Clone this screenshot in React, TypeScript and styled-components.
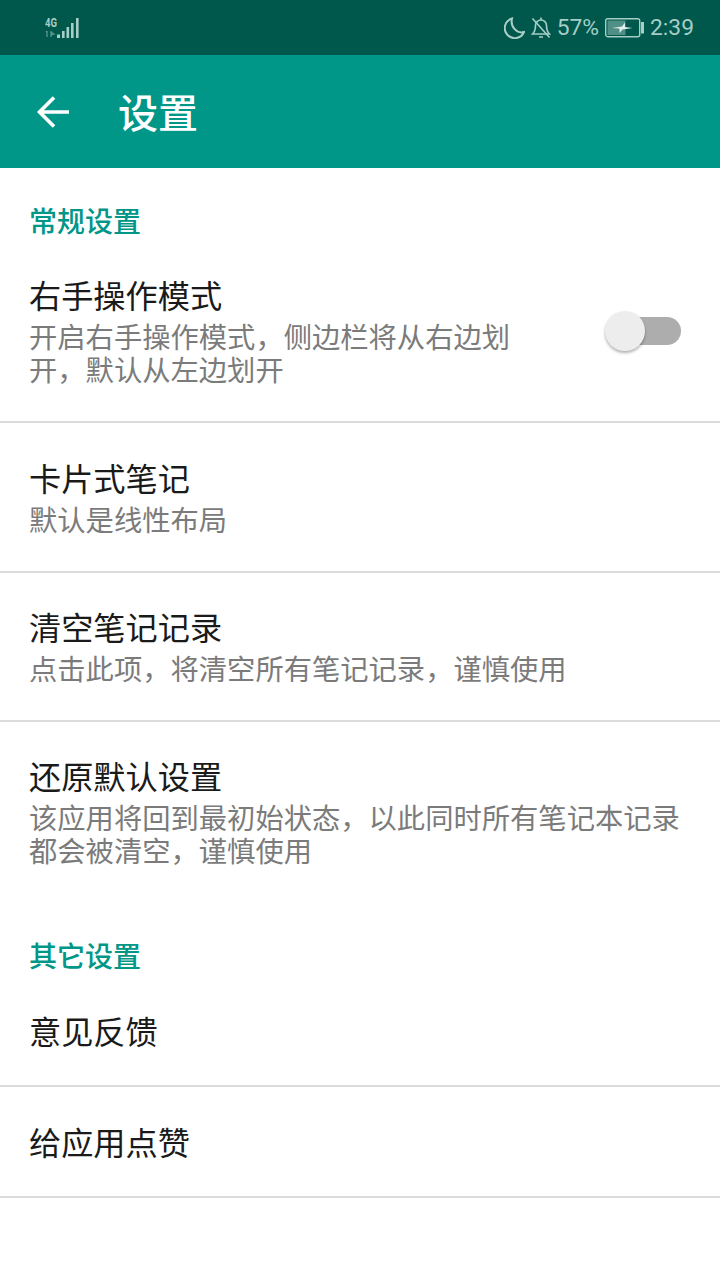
import styled, { createGlobalStyle } from "styled-components";

const GlobalStyle = createGlobalStyle`
    html, body {
        margin: 0;
        padding: 0;
        background: #fff;
    }
    * {
        box-sizing: border-box;
    }
`;

const Page = styled.div`
    width: 720px;
    height: 1280px;
    overflow: hidden;
    background: #fff;
    font-family: "Noto Sans CJK SC", "Noto Sans", sans-serif;
`;

const StatusBar = styled.div`
    display: flex;
    align-items: center;
    justify-content: space-between;
    height: 55px;
    padding: 0 26px 0 45px;
    background: #00574b;
    color: #a6cdc6;
`;

const StatusRight = styled.div`
    display: flex;
    align-items: center;
    gap: 6px;
    font-family: Roboto, sans-serif;
    font-size: 22.8px;
    line-height: 28px;

    svg {
        display: block;
    }
`;

const StatusText = styled.span`
    padding-top: 1px;
`;

const Toolbar = styled.div`
    display: flex;
    align-items: center;
    height: 113px;
    padding-left: 36px;
    background: #009688;
    color: #fff;
`;

const Title = styled.h1`
    margin: -2px 0 0 48px;
    font-size: 40px;
    font-weight: 500;
    line-height: 50px;
`;

const SectionTitle = styled.div<{ $top: number }>`
    padding: ${(p) => p.$top}px 0 0 29px;
    color: #009688;
    font-size: 28px;
    font-weight: 500;
    line-height: 36px;
`;

const Row = styled.div<{ $height: number; $top: number; $line?: boolean }>`
    display: flex;
    align-items: flex-start;
    justify-content: space-between;
    height: ${(p) => p.$height}px;
    padding: ${(p) => p.$top}px 39px 0 29px;
    border-bottom: ${(p) => (p.$line === false ? "none" : "2px solid #dcdcdc")};
`;

const RowText = styled.div<{ $width?: number }>`
    width: ${(p) => (p.$width ? `${p.$width}px` : "auto")};
`;

const RowTitle = styled.div`
    margin-bottom: 4px;
    color: #1a1a1a;
    font-size: 32.2px;
    line-height: 42px;
`;

const RowDesc = styled.div`
    color: #7b7b7b;
    font-size: 28.3px;
    line-height: 33px;
`;

const Switch = styled.div`
    position: relative;
    flex: none;
    width: 76px;
    height: 44px;
    margin-top: 36px;
`;

const SwitchTrack = styled.div`
    position: absolute;
    top: 8px;
    left: 10px;
    width: 66px;
    height: 28px;
    border-radius: 14px;
    background: #adadad;
`;

const SwitchThumb = styled.div`
    position: absolute;
    top: 2px;
    left: 0;
    width: 40px;
    height: 40px;
    border-radius: 50%;
    background: #ededed;
    box-shadow: 0 2px 3px rgba(0, 0, 0, 0.3);
`;

function SignalIcon() {
    return (
        <svg width="36" height="24" viewBox="45 15 36 24">
            <text
                x="45"
                y="26"
                fontFamily="Roboto, sans-serif"
                fontSize="13"
                fontWeight="700"
                fill="#a6cdc6"
                textLength="12"
                lengthAdjust="spacingAndGlyphs"
            >
                4G
            </text>
            <path d="M47 30v6M46 31l1-1M51 30v6M51 31l3 2-3 1" stroke="#5f9c92" strokeWidth="1.2" fill="none" />
            <g fill="#a6cdc6">
                <rect x="57" y="33.5" width="3" height="3.5" />
                <rect x="62" y="30" width="2.6" height="7" />
                <rect x="66.5" y="26" width="2.6" height="11" />
                <rect x="71" y="22" width="2.6" height="15" />
                <rect x="76" y="17" width="2.6" height="20" />
            </g>
        </svg>
    );
}

function MoonIcon() {
    return (
        <svg width="21" height="22" viewBox="0 0 21 22" fill="none" stroke="#a6cdc6" strokeWidth="2">
            <path d="M8 1.5a10 10 0 1 0 12 13.5C13 17 6 10 8 1.5z" />
        </svg>
    );
}

function BellOffIcon() {
    return (
        <svg width="20" height="22" viewBox="0 0 20 22" fill="none" stroke="#a6cdc6" strokeWidth="1.6">
            <path d="M10 3a5.5 5.5 0 0 1 5.5 5.5c0 4.5 1 6.5 3 8.5h-17c2-2 3-4 3-8.5A5.5 5.5 0 0 1 10 3z" />
            <path d="M8 20h4M10 0.5V3M1.5 1.5l17 19" />
        </svg>
    );
}

function BatteryIcon() {
    return (
        <svg width="39" height="20" viewBox="0 0 39 20">
            <rect x="0.7" y="0.7" width="34" height="18" rx="2" fill="none" stroke="#a6cdc6" strokeWidth="1.4" />
            <rect x="2.5" y="2.5" width="18" height="14.5" fill="#4f8f85" />
            <rect x="36" y="4" width="3" height="11.5" fill="#a6cdc6" />
            <path d="M7 10l10-1.5L20 4.5v4.5l7.5 1-10 1.5-3 3.5v-4.5z" fill="#e4f0ee" />
        </svg>
    );
}

function BackIcon() {
    return (
        <svg width="34" height="34" viewBox="0 0 34 34" fill="none" stroke="#fff" strokeWidth="3.6">
            <path d="M33 17H4M18 2.5L3.5 17 18 31.5" />
        </svg>
    );
}

function App() {
    return (
        <Page>
            <GlobalStyle />
            <StatusBar>
                <SignalIcon />
                <StatusRight>
                    <MoonIcon />
                    <BellOffIcon />
                    <StatusText>57%</StatusText>
                    <BatteryIcon />
                    <StatusText>2:39</StatusText>
                </StatusRight>
            </StatusBar>
            <Toolbar>
                <BackIcon />
                <Title>设置</Title>
            </Toolbar>

            <SectionTitle $top={34}>常规设置</SectionTitle>
            <Row $height={185} $top={35}>
                <RowText $width={500}>
                    <RowTitle>右手操作模式</RowTitle>
                    <RowDesc>开启右手操作模式，侧边栏将从右边划开，默认从左边划开</RowDesc>
                </RowText>
                <Switch>
                    <SwitchTrack />
                    <SwitchThumb />
                </Switch>
            </Row>
            <Row $height={150} $top={33}>
                <RowText>
                    <RowTitle>卡片式笔记</RowTitle>
                    <RowDesc>默认是线性布局</RowDesc>
                </RowText>
            </Row>
            <Row $height={149} $top={32}>
                <RowText>
                    <RowTitle>清空笔记记录</RowTitle>
                    <RowDesc>点击此项，将清空所有笔记记录，谨慎使用</RowDesc>
                </RowText>
            </Row>
            <Row $height={149} $top={32} $line={false}>
                <RowText>
                    <RowTitle>还原默认设置</RowTitle>
                    <RowDesc>该应用将回到最初始状态，以此同时所有笔记本记录都会被清空，谨慎使用</RowDesc>
                </RowText>
            </Row>

            <SectionTitle $top={66}>其它设置</SectionTitle>
            <Row $height={114} $top={36}>
                <RowTitle>意见反馈</RowTitle>
            </Row>
            <Row $height={111} $top={33}>
                <RowTitle>给应用点赞</RowTitle>
            </Row>
        </Page>
    );
}

export default App;
